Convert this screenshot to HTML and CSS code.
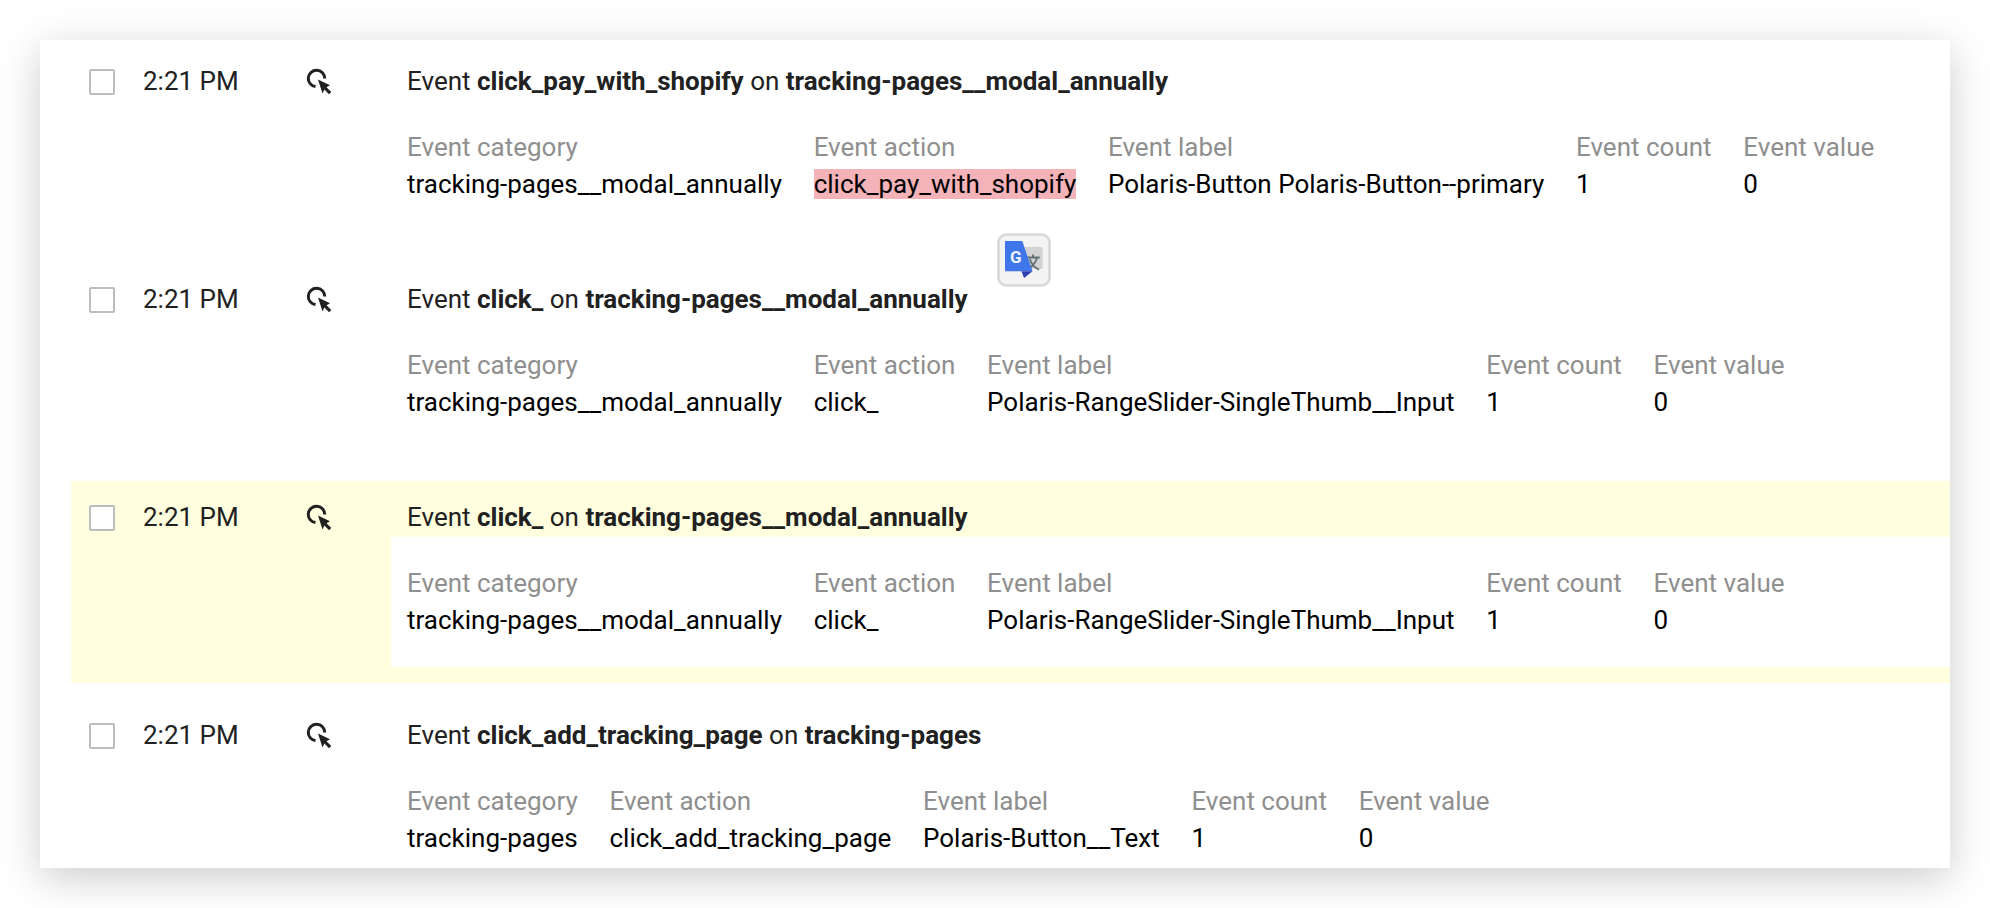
FILE: index.html
```html
<!DOCTYPE html>
<html lang="en">
<head>
    <meta charset="UTF-8">
    <meta name="viewport" content="width=device-width, initial-scale=1.0">
    <title>Events</title>
    <link rel="stylesheet" href="styles.css">
</head>

<body>
    <div class="panel">
        <div class="event">
            <span class="check"></span>
            <span class="time">2:21 PM</span>
            <svg class="hit-icon" viewBox="0 0 28 28"><path class="arc" d="M10.500 18.600A8.200 8.200 0 1 1 19.700 10.500"/><path d="M13 11.500L25 17.200 21.500 19.300 26.300 24 24 26.300 19.400 21.500 17.500 25.500z"/></svg>
            <div class="title">Event <b>click_pay_with_shopify</b> on <b>tracking-pages__modal_annually</b></div>
            <div class="details">
                <div class="col"><span class="label">Event category</span><span class="value">tracking-pages__modal_annually</span></div>
                <div class="col"><span class="label">Event action</span><span class="value"><span class="mark">click_pay_with_shopify</span></span></div>
                <div class="col"><span class="label">Event label</span><span class="value">Polaris-Button Polaris-Button--primary</span></div>
                <div class="col"><span class="label">Event count</span><span class="value">1</span></div>
                <div class="col"><span class="label">Event value</span><span class="value">0</span></div>
            </div>
        </div>

        <div class="event">
            <span class="check"></span>
            <span class="time">2:21 PM</span>
            <svg class="hit-icon" viewBox="0 0 28 28"><path class="arc" d="M10.500 18.600A8.200 8.200 0 1 1 19.700 10.500"/><path d="M13 11.500L25 17.200 21.500 19.300 26.300 24 24 26.300 19.400 21.500 17.500 25.500z"/></svg>
            <div class="title">Event <b>click_</b> on <b>tracking-pages__modal_annually</b></div>
            <div class="details">
                <div class="col"><span class="label">Event category</span><span class="value">tracking-pages__modal_annually</span></div>
                <div class="col"><span class="label">Event action</span><span class="value">click_</span></div>
                <div class="col"><span class="label">Event label</span><span class="value">Polaris-RangeSlider-SingleThumb__Input</span></div>
                <div class="col"><span class="label">Event count</span><span class="value">1</span></div>
                <div class="col"><span class="label">Event value</span><span class="value">0</span></div>
            </div>
        </div>

        <div class="event active">
            <span class="check"></span>
            <span class="time">2:21 PM</span>
            <svg class="hit-icon" viewBox="0 0 28 28"><path class="arc" d="M10.500 18.600A8.200 8.200 0 1 1 19.700 10.500"/><path d="M13 11.500L25 17.200 21.500 19.300 26.300 24 24 26.300 19.400 21.500 17.500 25.500z"/></svg>
            <div class="title">Event <b>click_</b> on <b>tracking-pages__modal_annually</b></div>
            <div class="details">
                <div class="col"><span class="label">Event category</span><span class="value">tracking-pages__modal_annually</span></div>
                <div class="col"><span class="label">Event action</span><span class="value">click_</span></div>
                <div class="col"><span class="label">Event label</span><span class="value">Polaris-RangeSlider-SingleThumb__Input</span></div>
                <div class="col"><span class="label">Event count</span><span class="value">1</span></div>
                <div class="col"><span class="label">Event value</span><span class="value">0</span></div>
            </div>
        </div>

        <div class="event">
            <span class="check"></span>
            <span class="time">2:21 PM</span>
            <svg class="hit-icon" viewBox="0 0 28 28"><path class="arc" d="M10.500 18.600A8.200 8.200 0 1 1 19.700 10.500"/><path d="M13 11.500L25 17.200 21.500 19.300 26.300 24 24 26.300 19.400 21.500 17.500 25.500z"/></svg>
            <div class="title">Event <b>click_add_tracking_page</b> on <b>tracking-pages</b></div>
            <div class="details">
                <div class="col"><span class="label">Event category</span><span class="value">tracking-pages</span></div>
                <div class="col"><span class="label">Event action</span><span class="value">click_add_tracking_page</span></div>
                <div class="col"><span class="label">Event label</span><span class="value">Polaris-Button__Text</span></div>
                <div class="col"><span class="label">Event count</span><span class="value">1</span></div>
                <div class="col"><span class="label">Event value</span><span class="value">0</span></div>
            </div>
        </div>

        <!-- translate popup sits over the rows -->
        <div class="translate">
            <svg viewBox="0 0 54 54" width="54" height="54">
                <rect x="1.500" y="1.500" width="51" height="51" rx="8" fill="#f3f3f3" stroke="#d8d8d8" stroke-width="2.500"/>
                <rect x="20" y="14" width="25.500" height="22" rx="1.500" fill="#d2d2d2"/>
                <path d="M36 21.500v3M30 24.500h12.700M40 25c-1.500 4.500-4.500 8.500-9 11M32.700 26c1.500 4.500 4.800 8.500 9.300 10.700" fill="none" stroke="#5f6f73" stroke-width="1.800"/>
                <path d="M8 8H25.300L35.500 38.300H8z" fill="#3f76ea"/>
                <path d="M24.500 38.300H35.500L27 45z" fill="#2f3fb0"/>
                <text x="13" y="29.500" class="g">G</text>
            </svg>
        </div>
    </div>
</body>

</html>
```
FILE: styles.css
```css
html, body {
  margin: 0;
  height: 908px;
  overflow: hidden;
  background: #fff;
}
body {
  padding: 40px;
  box-sizing: border-box;
  font-family: Roboto, "Liberation Sans", sans-serif;
  font-size: 26px;
  color: #212121;
}
.panel {
  position: relative;
  height: 828px;
  padding: 5px 0 0 31px;
  box-sizing: border-box;
  background: #fff;
  box-shadow: 0 10px 40px rgba(0, 0, 0, 0.2);
  overflow: hidden;
}
.event {
  display: grid;
  grid-template-columns: 18px 26px 28px 162px 86px 1fr;
  grid-template-rows: 56px 130px;
  height: 202px;
  margin-bottom: 16px;
}
.check {
  grid-column: 2;
  grid-row: 1;
  margin-top: 24px;
  width: 26px;
  height: 26px;
  box-sizing: border-box;
  border: 2px solid #bdbdbd;
  border-radius: 2px;
  background: #fff;
}
.time {
  grid-column: 4;
  grid-row: 1;
  padding-top: 16px;
  line-height: 40px;
}
.hit-icon {
  grid-column: 5;
  grid-row: 1;
  margin-top: 23px;
  width: 28px;
  height: 28px;
  fill: #212121;
}
.arc {
  fill: none;
  stroke: #212121;
  stroke-width: 3;
}
.title {
  grid-column: 6;
  grid-row: 1;
  padding: 16px 0 0 16px;
  line-height: 40px;
}
.title b {
  font-weight: 700;
}
.details {
  grid-column: 6;
  grid-row: 2;
  display: flex;
  gap: 31.7px;
  padding: 28px 16px 0;
  color: #000;
}
.active {
  background: #ffffdf;
}
.active .details {
  background: #fff;
}
.col {
  display: flex;
  flex-direction: column;
  white-space: nowrap;
}
.label {
  color: #8f8f8f;
  line-height: 37px;
}
.value {
  line-height: 37px;
}
.mark {
  background: #f4b3b8;
}
.translate {
  position: absolute;
  left: 957px;
  top: 193px;
  width: 54px;
  height: 54px;
}
.g {
  font-family: Roboto, sans-serif;
  font-size: 17px;
  font-weight: 700;
  fill: #eef3fe;
}
```
